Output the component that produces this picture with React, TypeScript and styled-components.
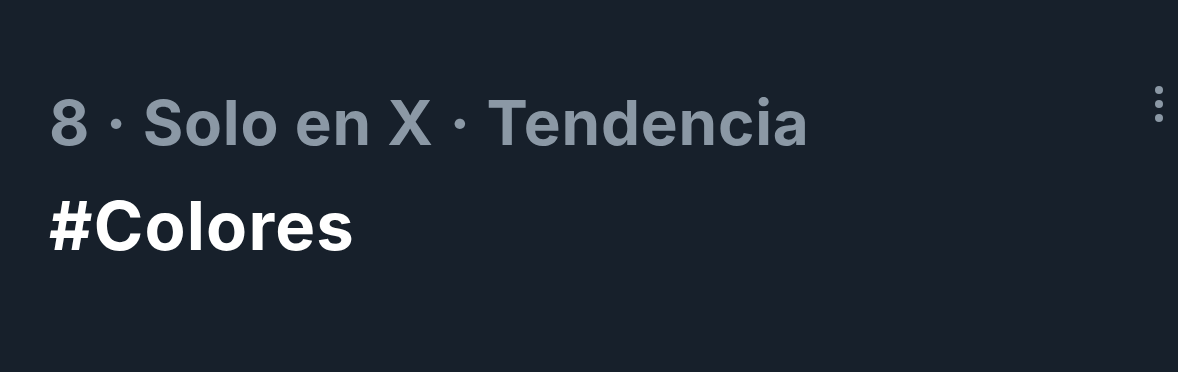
import React from "react";
import styled, { createGlobalStyle } from "styled-components";

const Global = createGlobalStyle`
  html, body { margin: 0; padding: 0; background: #17202b; }
  body { font-family: Inter, "Noto Sans", sans-serif; }
`;

const Card = styled.div`
  width: 1178px;
  height: 372px;
  box-sizing: border-box;
  background: #17202b;
  display: flex;
  align-items: flex-start;
  justify-content: space-between;
  padding: 79px 15px 0 49px;
`;

const Body = styled.div`
  display: flex;
  flex-direction: column;
  gap: 15px;
`;

const Meta = styled.div`
  color: #8b98a5;
  font-size: 62px;
  font-weight: 700;
  line-height: 88px;
  letter-spacing: 0.8px;
`;

const Title = styled.div`
  color: #ffffff;
  font-size: 67px;
  font-weight: 700;
  line-height: 88px;
  letter-spacing: 1.2px;
`;

const MoreButton = styled.button`
  background: none;
  border: none;
  padding: 0;
  margin-top: 7px;
  width: 8px;
  display: flex;
  flex-direction: column;
  align-items: center;
  gap: 6px;
  cursor: pointer;
`;

const Dot = styled.span`
  width: 8px;
  height: 8px;
  border-radius: 50%;
  background: #8b98a5;
`;

export default function App() {
  return (
    <>
      <Global />
      <Card>
        <Body>
          <Meta>8 · Solo en X · Tendencia</Meta>
          <Title>#Colores</Title>
        </Body>
        <MoreButton aria-label="Más opciones">
          <Dot />
          <Dot />
          <Dot />
        </MoreButton>
      </Card>
    </>
  );
}
